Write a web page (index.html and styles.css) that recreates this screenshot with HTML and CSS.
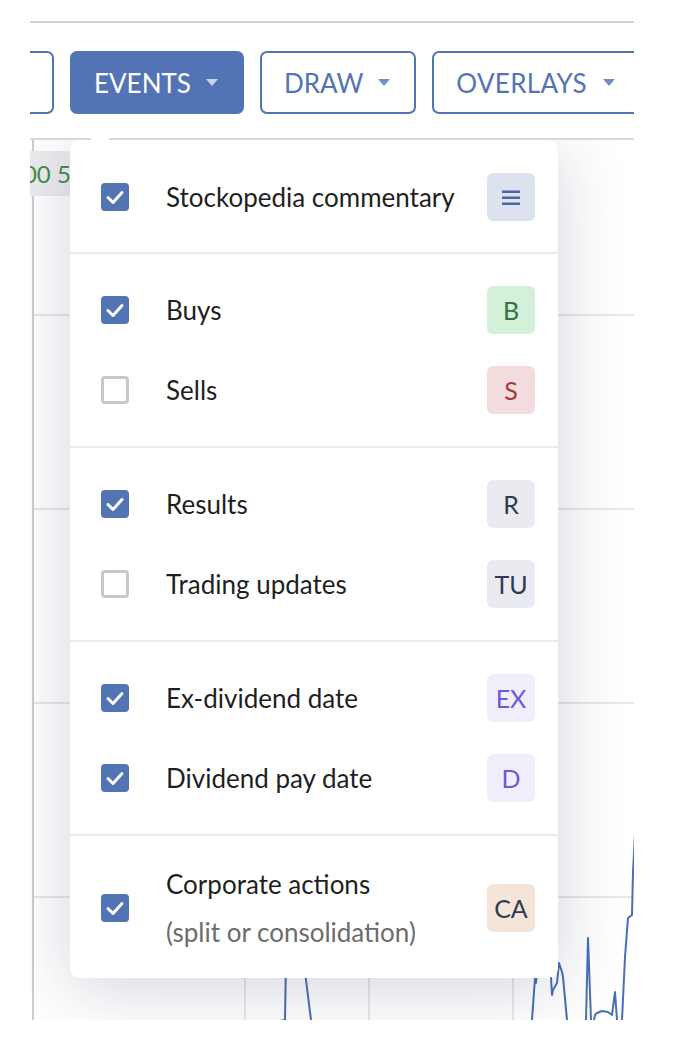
FILE: index.html
```html
<!DOCTYPE html>
<html>
<head>
<meta charset="utf-8">
<link rel="stylesheet" href="styles.css">
</head>
<body>
<div class="panel">
  <div class="topline"></div>
  <div class="toolbar">
    <button class="btn btn-outline btn-cut" aria-label="Period"></button>
    <button class="btn btn-filled">EVENTS <span class="caret"></span></button>
    <button class="btn btn-outline">DRAW <span class="caret"></span></button>
    <button class="btn btn-outline btn-wide">OVERLAYS <span class="caret"></span></button>
  </div>
  <div class="chart">
    <svg class="plot" width="604" height="880" viewBox="0 0 604 880">
      <g class="grid">
        <line x1="3" y1="175" x2="604" y2="175"/>
        <line x1="3" y1="369" x2="604" y2="369"/>
        <line x1="3" y1="563" x2="604" y2="563"/>
        <line x1="3" y1="757" x2="604" y2="757"/>
        <line x1="215" y1="0" x2="215" y2="880"/>
        <line x1="339" y1="0" x2="339" y2="880"/>
        <line x1="483" y1="0" x2="483" y2="880"/>
      </g>
      <line class="axis" x1="3" y1="0" x2="3" y2="880"/>
      <path class="series" d="M150 900 L255 880 L256 820 L270 790 L276 840 L281 880 L290 900 L500 900 L502 880 L505 838 L506 843 L510 800 L520 820 L522 855 L523 850 L527 843 L529 823 L532 832 L533 837 L537 880 L540 900 L555 900 L556 880 L558 798 L561 880 L563 900 L564 880 L565 875 L567 873 L572 871 L578 872 L582 875 L585 852 L587 880 L590 900 L592 880 L595 817 L598 778 L602 775 L603 732 L610 600"/>
    </svg>
    <div class="ylabel">100 50</div>
    <div class="dropdown">
      <div class="section">
        <div class="row">
          <span class="check on"><svg viewBox="0 0 28 28"><polyline points="7,14.5 12,19.5 21,9.5"/></svg></span>
          <span class="label">Stockopedia commentary</span>
          <span class="badge b-note"><svg width="18" height="16" viewBox="0 0 18 16"><rect x="0" y="1.5" width="18" height="2.5"/><rect x="0" y="7.5" width="18" height="2.5"/><rect x="0" y="13.5" width="18" height="2.5"/></svg></span>
        </div>
      </div>
      <div class="section">
        <div class="row">
          <span class="check on"><svg viewBox="0 0 28 28"><polyline points="7,14.5 12,19.5 21,9.5"/></svg></span>
          <span class="label">Buys</span>
          <span class="badge b-buy">B</span>
        </div>
        <div class="row">
          <span class="check off"></span>
          <span class="label">Sells</span>
          <span class="badge b-sell">S</span>
        </div>
      </div>
      <div class="section">
        <div class="row">
          <span class="check on"><svg viewBox="0 0 28 28"><polyline points="7,14.5 12,19.5 21,9.5"/></svg></span>
          <span class="label">Results</span>
          <span class="badge b-neutral">R</span>
        </div>
        <div class="row">
          <span class="check off"></span>
          <span class="label">Trading updates</span>
          <span class="badge b-neutral">TU</span>
        </div>
      </div>
      <div class="section">
        <div class="row">
          <span class="check on"><svg viewBox="0 0 28 28"><polyline points="7,14.5 12,19.5 21,9.5"/></svg></span>
          <span class="label">Ex-dividend date</span>
          <span class="badge b-div">EX</span>
        </div>
        <div class="row">
          <span class="check on"><svg viewBox="0 0 28 28"><polyline points="7,14.5 12,19.5 21,9.5"/></svg></span>
          <span class="label">Dividend pay date</span>
          <span class="badge b-div">D</span>
        </div>
      </div>
      <div class="section last">
        <div class="row">
          <span class="check on"><svg viewBox="0 0 28 28"><polyline points="7,14.5 12,19.5 21,9.5"/></svg></span>
          <span class="label two">
            <span class="title">Corporate actions</span>
            <span class="sub">(split or consolidation)</span>
          </span>
          <span class="badge b-corp">CA</span>
        </div>
      </div>
    </div>
  </div>
  <div class="pointer"></div>
</div>
</body>
</html>
```
FILE: styles.css
```css
* { box-sizing: border-box; }

body {
  margin: 0;
  background: #ffffff;
  font-family: Lato, "Noto Sans", sans-serif;
}

.panel {
  position: relative;
  margin-left: 30px;
  width: 604px;
  padding-top: 21px;
}

.topline {
  height: 2px;
  background: #d2d2d2;
}

.toolbar {
  display: flex;
  gap: 16px;
  margin-top: 28px;
  overflow: hidden;
}

.btn {
  flex-shrink: 0;
  height: 63px;
  border: 2px solid #5274b4;
  border-radius: 7px;
  background: #ffffff;
  color: #5274b4;
  font-family: Lato, "Noto Sans", sans-serif;
  font-size: 26px;
  padding: 0 24px 0 22px;
  display: flex;
  align-items: center;
  gap: 15px;
  white-space: nowrap;
}

.btn-filled {
  background: #5274b4;
  color: #ffffff;
}

.btn-cut {
  width: 140px;
  margin-left: -116px;
}

.btn-wide {
  letter-spacing: 0.3px;
  gap: 16px;
  padding-right: 40px;
}

.caret {
  width: 0;
  height: 0;
  border-left: 6px solid transparent;
  border-right: 6px solid transparent;
  border-top: 7px solid #6f8ec6;
}

.btn-filled .caret {
  border-top-color: #c7d3ea;
}

.chart {
  position: relative;
  height: 882px;
  margin-top: 24px;
  border-top: 2px solid #d8d9de;
  overflow: hidden;
}

.plot {
  display: block;
}

.grid line {
  stroke: #e8e8ea;
  stroke-width: 2;
}

.axis {
  stroke: #cdcdcf;
  stroke-width: 2;
}

.series {
  fill: none;
  stroke: #4a6fb5;
  stroke-width: 2;
  stroke-linejoin: round;
}

.ylabel {
  position: absolute;
  top: 11px;
  left: -31px;
  height: 45px;
  padding: 0 10px;
  background: #ececee;
  color: #3f8f4a;
  font-size: 24px;
  line-height: 45px;
}

.dropdown {
  position: absolute;
  top: 0;
  left: 40px;
  width: 488px;
  background: #ffffff;
  border-radius: 10px;
  box-shadow: 0 10px 70px rgba(30, 40, 80, 0.2);
}

.section {
  display: flex;
  flex-direction: column;
  gap: 32px;
  padding: 32px 23px 32px 31px;
  border-top: 2px solid #ebebeb;
}

.section:first-child {
  border-top: none;
  padding-top: 33px;
  padding-bottom: 31px;
}

.section.last {
  padding-bottom: 30px;
}

.row {
  display: flex;
  align-items: center;
  min-height: 48px;
}

.check {
  width: 28px;
  height: 28px;
  border-radius: 4px;
  flex-shrink: 0;
  margin-right: 37px;
}

.check svg {
  display: block;
  width: 28px;
  height: 28px;
}

.check polyline {
  fill: none;
  stroke: #ffffff;
  stroke-width: 3;
  stroke-linecap: round;
  stroke-linejoin: round;
}

.check.on {
  background: #5274b4;
}

.check.off {
  border: 3px solid #c8c8c8;
}

.label {
  flex: 1;
  font-size: 26px;
  color: #1f1f1f;
  line-height: 32px;
}

.label.two {
  display: flex;
  flex-direction: column;
  gap: 16px;
}

.sub {
  color: #6c6c6c;
}

.badge {
  width: 48px;
  height: 48px;
  flex-shrink: 0;
  border-radius: 6px;
  display: flex;
  align-items: center;
  justify-content: center;
  font-size: 25px;
}

.b-note { background: #dce3ef; }
.b-note svg rect { fill: #4a67a3; }
.b-buy { background: #d3f0d9; color: #357340; }
.b-sell { background: #f2dcdd; color: #a3373b; }
.b-neutral { background: #e9ebf0; color: #2f3950; }
.b-div { background: #f1eefc; color: #7059d4; }
.b-corp { background: #f5e4d8; color: #2f3a55; }

.pointer {
  position: absolute;
  left: 60px;
  top: 132px;
  width: 0;
  height: 0;
  border-left: 10px solid transparent;
  border-right: 10px solid transparent;
  border-bottom: 8px solid #ffffff;
}
```
